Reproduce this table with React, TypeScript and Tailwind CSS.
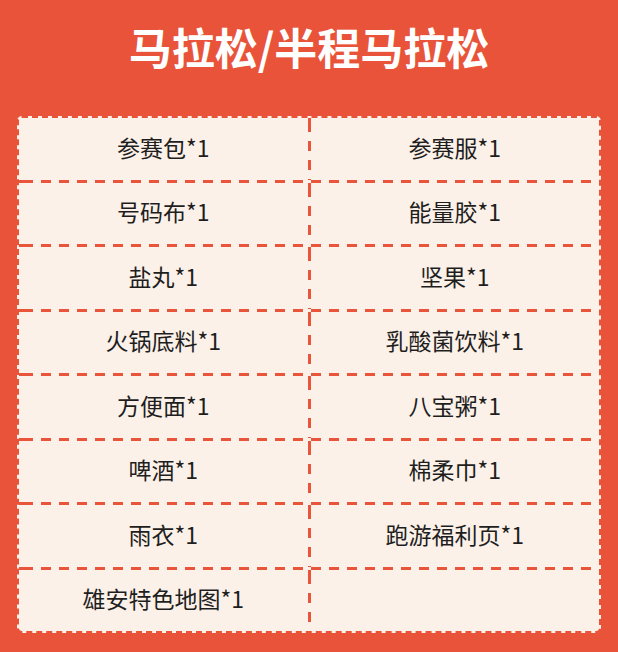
import { Fragment } from 'react';

const rows: [string, string][] = [
  ['参赛包*1', '参赛服*1'],
  ['号码布*1', '能量胶*1'],
  ['盐丸*1', '坚果*1'],
  ['火锅底料*1', '乳酸菌饮料*1'],
  ['方便面*1', '八宝粥*1'],
  ['啤酒*1', '棉柔巾*1'],
  ['雨衣*1', '跑游福利页*1'],
  ['雄安特色地图*1', ''],
];

function HDash() {
  return (
    <div className="h-[3px] w-full bg-[repeating-linear-gradient(90deg,#e8553b_0_10px,transparent_10px_18px)] bg-[position:4px_0]" />
  );
}

function VDash() {
  return (
    <div className="w-[3px] self-stretch bg-[repeating-linear-gradient(180deg,#e8553b_0_10px,transparent_10px_19px)] bg-[position:0_4px]" />
  );
}

export default function App() {
  return (
    <div
      className="w-[618px] h-[652px] bg-[#e9533a] px-[17px] overflow-hidden"
      style={{ fontFamily: '"Noto Sans CJK SC", "Noto Sans", sans-serif' }}
    >
      {/* Title */}
      <div className="h-[116px] pt-[25px]">
        <h1 className="text-center text-white font-bold text-[43px] leading-[43px]">
          马拉松/半程马拉松
        </h1>
      </div>

      {/* Table */}
      <div className="bg-[#fcf1e8] border-2 border-dashed border-[#e9533a] rounded-[5px] flex flex-col">
        {rows.map(([left, right], i) => (
          <Fragment key={i}>
            {i > 0 && <HDash />}
            <div className="flex h-[61.5px]">
              <div className="flex-1 flex items-center justify-center pb-[4px] text-[23px] text-[#1e1e1e]">
                {left}
              </div>
              <VDash />
              <div className="flex-1 flex items-center justify-center pb-[4px] text-[23px] text-[#1e1e1e]">
                {right}
              </div>
            </div>
          </Fragment>
        ))}
      </div>
    </div>
  );
}
